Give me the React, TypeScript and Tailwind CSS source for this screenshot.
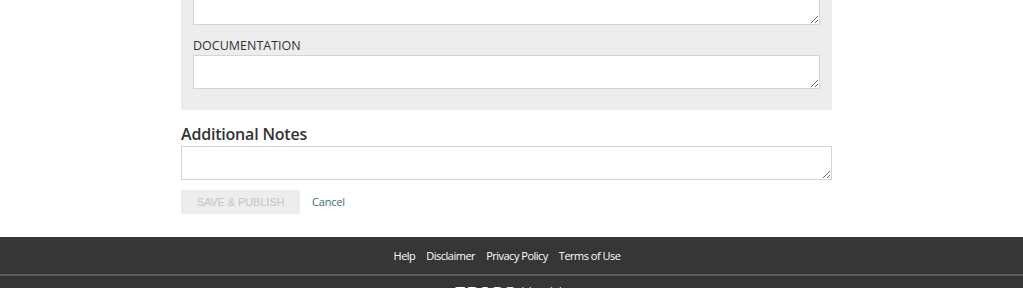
import React from "react";

export default function App() {
  return (
    <div className="w-[1023px] h-[288px] overflow-hidden bg-white" style={{ fontFamily: '"Open Sans", sans-serif' }}>
      <div className="-mt-[40px] ml-[181px] w-[651px]">
        <div className="bg-[#ededed] px-[12px] pt-[10px] pb-[21px]">
          <textarea className="block w-full h-[55px] bg-white border border-[#d3d3d3] outline-none" />
          <label className="block mt-[12px] text-[12.5px] leading-[18px] text-[#333]">DOCUMENTATION</label>
          <textarea className="block w-full h-[34px] bg-white border border-[#d3d3d3] outline-none" />
        </div>
        <h2 className="mt-[13px] text-[16px] leading-[22px] font-semibold tracking-[-0.2px] text-[#333]">Additional Notes</h2>
        <textarea className="block mt-[1px] w-full h-[34px] bg-white border border-[#d3d3d3] outline-none" />
        <div className="mt-[10px] flex items-center gap-[12px]">
          <button
            disabled
            className="h-[24px] w-[119px] bg-[#ededed] text-[#c4c4c4] text-[11px] tracking-[-0.1px]"
            style={{ fontFamily: '"Liberation Sans", Arial, sans-serif' }}
          >
            SAVE &amp; PUBLISH
          </button>
          <a className="text-[11px] tracking-[-0.2px] text-[#3b6b7b]">Cancel</a>
        </div>
      </div>
      <footer className="mt-[23px] bg-[#363636]">
        <div className="flex justify-center gap-[11px] pt-[10px] pb-[10px] pr-[9px] text-[11px] tracking-[-0.5px] leading-[17px] text-white">
          <a>Help</a>
          <a>Disclaimer</a>
          <a>Privacy Policy</a>
          <a>Terms of Use</a>
        </div>
        <div className="border-t-[2px] border-[#5c5c5c] border-b border-b-[#2e2e2e]" />
        <div className="flex justify-center pt-[6px] text-white leading-[20px]">
          <span className="text-[17px] font-bold tracking-[1px]" style={{ fontFamily: '"Liberation Serif", serif' }}>EBSCO</span>
          <span className="text-[16px] ml-[3px] font-light">Health</span>
        </div>
      </footer>
    </div>
  );
}
